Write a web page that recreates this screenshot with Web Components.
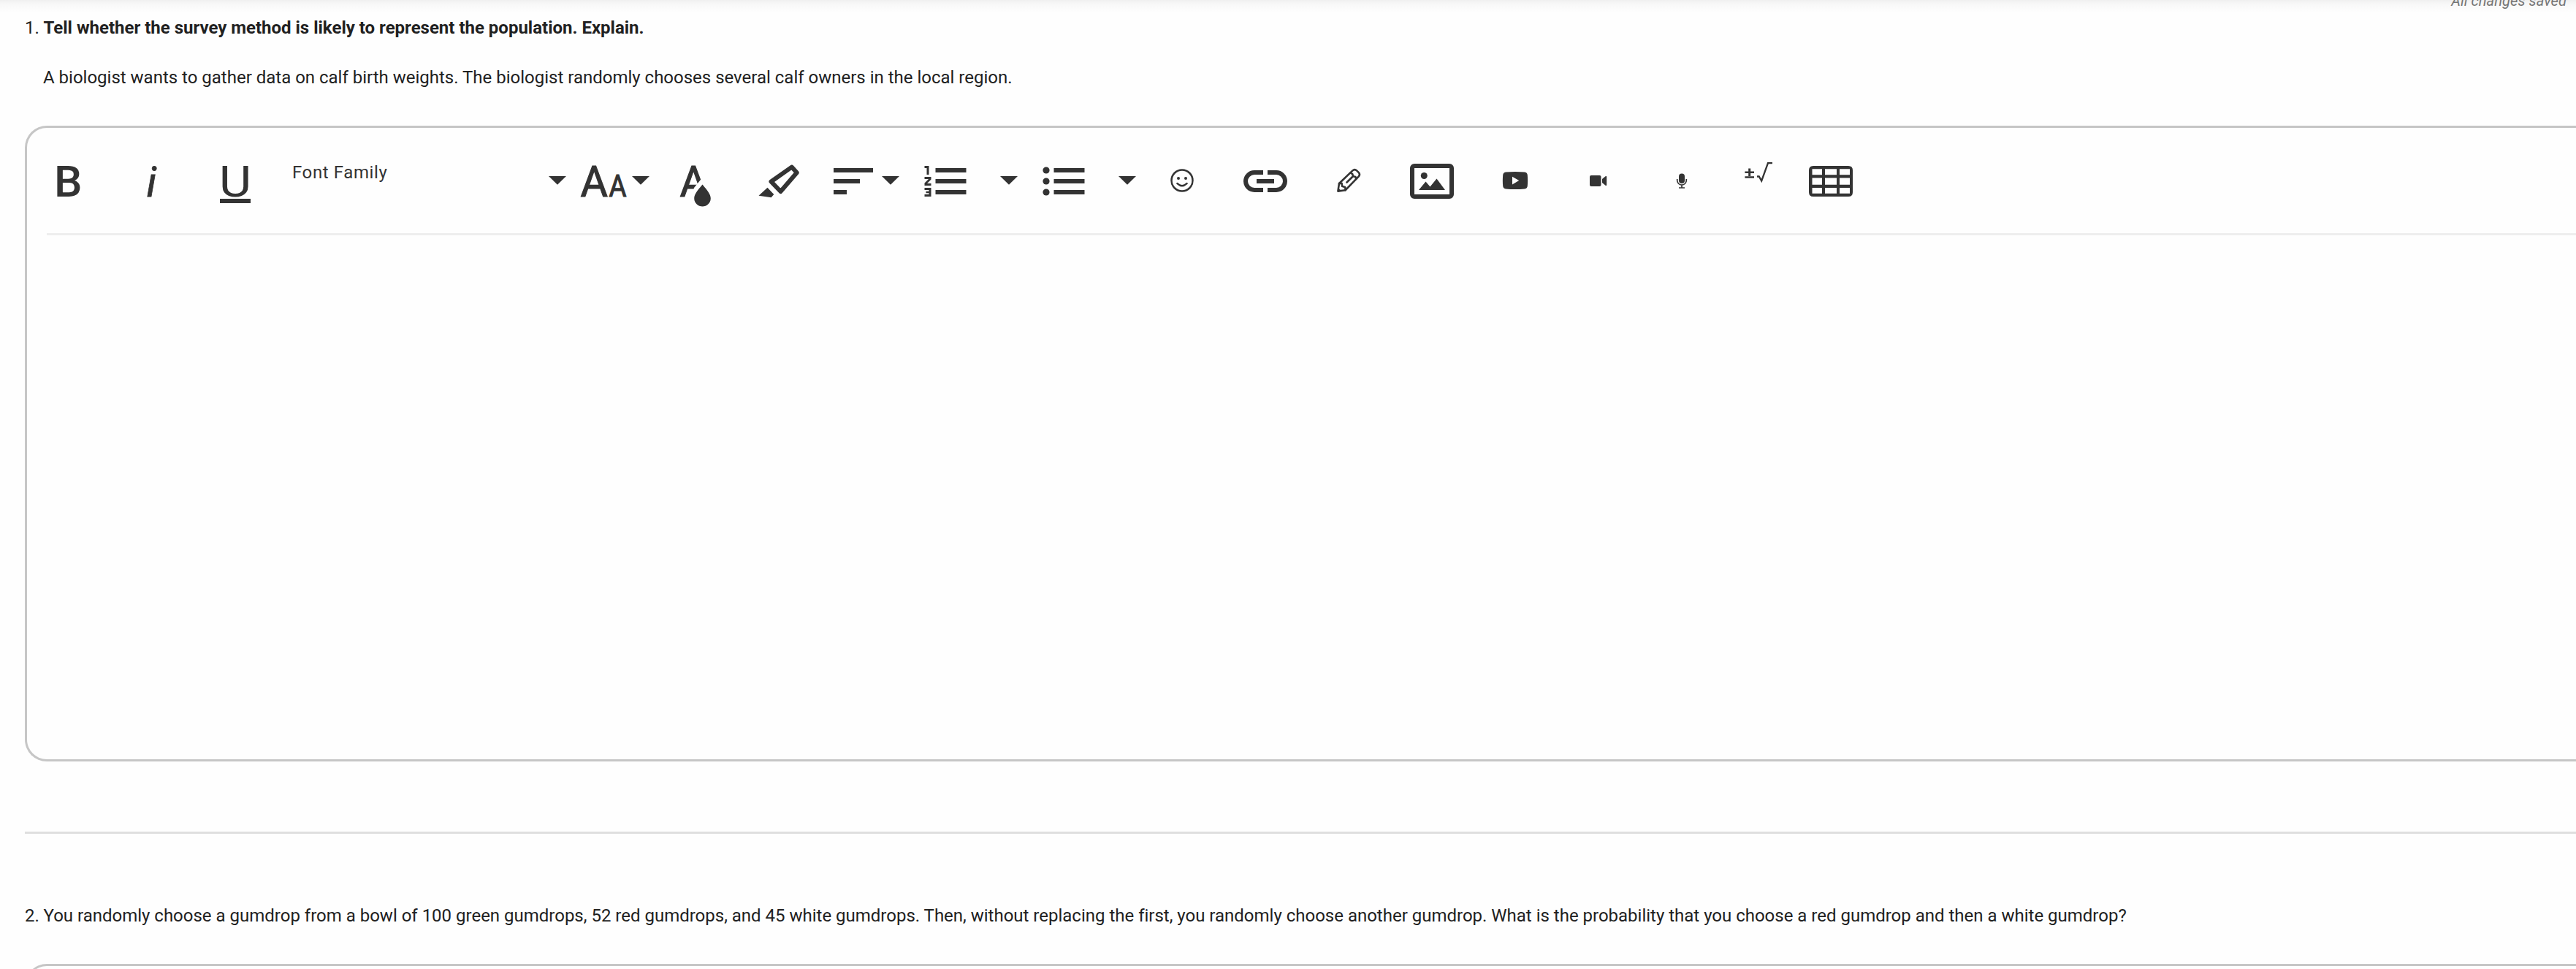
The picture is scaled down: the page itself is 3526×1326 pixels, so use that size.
<!DOCTYPE html>
<html lang="en">
<head>
<meta charset="utf-8">
<title>Assignment</title>
<style>
html,body{margin:0;padding:0;background:#fefefe;font-family:Roboto,"Liberation Sans",sans-serif}
body{height:1326px;overflow:hidden}
</style>
</head>
<body>
<assignment-page>
  <save-status slot="status">All changes saved</save-status>
  <question-item style="--head-h:172px;--lead:16px;--editor-h:864px" number="1.">
    <b>Tell whether the survey method is likely to represent the population. Explain.</b>
    <span slot="detail">A biologist wants to gather data on calf birth weights. The biologist randomly chooses several calf owners in the local region.</span>
    <rich-editor slot="editor"><editor-toolbar></editor-toolbar></rich-editor>
  </question-item>
  <section-rule></section-rule>
  <question-item style="--head-h:178px;--lead:90px;--editor-h:864px" number="2.">
    <span>You randomly choose a gumdrop from a bowl of 100 green gumdrops, 52 red gumdrops, and 45 white gumdrops. Then, without replacing the first, you randomly choose another gumdrop. What is the probability that you choose a red gumdrop and then a white gumdrop?</span>
    <rich-editor slot="editor"></rich-editor>
  </question-item>
</assignment-page>
<script>
const define = (name, html, setup) => customElements.define(name, class extends HTMLElement {
  constructor() {
    super();
    this.attachShadow({mode: 'open'}).innerHTML = html;
  }
  connectedCallback() { if (setup) setup(this); }
});

define('assignment-page', `<style>
:host{display:block;position:relative;height:1326px;overflow:hidden}
.shade{position:absolute;left:0;top:0;width:100%;height:17px;background:linear-gradient(#f0f0f0,#f8f8f8 35%,#fefefe)}
.status{position:absolute;right:13px;top:-13px}
main{position:relative;display:flex;flex-direction:column;padding-left:34px}
</style><div class="shade"></div><div class="status"><slot name="status"></slot></div><main><slot></slot></main>`);

define('save-status', `<style>:host{display:block;font:italic 400 20px/28px Roboto,sans-serif;letter-spacing:.1px;color:#757575;white-space:nowrap}</style><slot></slot>`);

define('section-rule', `<style>:host{display:block;height:3px;margin-top:96px;background:#dfdfdf}</style>`);

define('question-item', `<style>
:host{display:flex;flex-direction:column;color:#212121;font-size:24px;line-height:44px}
.head{height:var(--head-h);box-sizing:border-box;padding-top:var(--lead);display:flex;flex-direction:column;gap:24px;white-space:nowrap;letter-spacing:-.005px}
.line{display:flex}
.num{width:25.500px;flex:none}
.detail{padding-left:25px}
::slotted(rich-editor){height:var(--editor-h)}
</style><div class="head"><div class="line"><span class="num"></span><slot></slot></div><div class="detail"><slot name="detail"></slot></div></div><slot name="editor"></slot>`,
el => { el.shadowRoot.querySelector('.num').textContent = el.getAttribute('number'); });

define('rich-editor', `<style>
:host{display:flex;flex-direction:column;border:3px solid #c6c6c6;border-right:0;border-radius:30px 0 0 30px;background:#fefefe}
.bar{height:144px;flex:none}
.rule{height:3px;flex:none;margin-left:27px;background:#eee}
.area{flex:1}
</style><div class="bar"><slot></slot></div><div class="rule"></div><div class="area"></div>`);

// Icon art shares one coordinate grid; each entry is [left edge, width, markup].
const arrow = x => `<path d="M${x} 241h24l-12 11.7z"/>`;
const lines = x => `<path d="M${x} 230h42v6h-42zM${x} 245h42v6h-42zM${x} 260h42v6h-42z"/>`;
const ICONS = {
  bold: [37, 113, `<text x="74" y="269" font-size="59" font-weight="500" textLength="38.500" lengthAdjust="spacingAndGlyphs">B</text>`],
  italic: [150, 114, `<text x="200.500" y="269" font-size="58" font-style="italic" stroke="#333" stroke-width=".8">i</text>`],
  underline: [264, 114, `<text x="300" y="268.500" font-size="58.500" textLength="44" lengthAdjust="spacingAndGlyphs">U</text><path d="M301 272h42v6h-42z"/>`],
  size: [783, 110, `<text class="l" x="794.500" y="269" font-size="59" textLength="37.500" lengthAdjust="spacingAndGlyphs">A</text><text class="l" x="833.500" y="269" font-size="42" textLength="24" lengthAdjust="spacingAndGlyphs">A</text>${arrow(865)}`],
  color: [893, 112, `<text class="l" x="930.500" y="269" font-size="59" textLength="37.500" lengthAdjust="spacingAndGlyphs">A</text><path fill="#fefefe" d="M963 241l-13 16-5 18 8 15h27v-40z"/><path d="M961.500 252.500c5 6 11.300 13 11.300 18.700a11.300 11.300 0 0 1-22.600 0c0-5.700 6.300-12.700 11.300-18.700z"/>`],
  highlight: [1005, 114, `<path d="M1083.700 228.600L1090.700 236.300L1068.500 262L1055.500 248.500z" fill="none" stroke="#333" stroke-width="6" stroke-linejoin="round"/><path d="M1038.500 267.700l12-11 8.800 9.300-3.700 4.300z"/>`],
  align: [1119, 120, `<path d="M1141 230h54v6h-54zM1141 245h36v6h-36zM1141 260h18v6h-18z"/>${arrow(1207)}`],
  ordered: [1239, 162, `<path d="M1265.500 227h6v12h-3v-9h-3zM1265.500 242h9v3.500l-5.500 5.500h5.500v3h-9v-3.500l5.500-5.500h-5.500zM1265.500 257h9v12h-9v-3h6v-1.700h-4v-2.600h4v-1.700h-6z"/>${lines(1280.5)}${arrow(1369)}`],
  bullets: [1401, 162, `<circle cx="1432" cy="233" r="4.600"/><circle cx="1432" cy="248" r="4.600"/><circle cx="1432" cy="263" r="4.600"/>${lines(1442.5)}${arrow(1531)}`],
  emoji: [1563, 112, `<g fill="none" stroke="#333" stroke-width="2.500" stroke-linecap="round"><circle cx="1618" cy="247" r="14.500"/><path d="M1611.500 251.200q6.500 6 13 0"/></g><circle cx="1613" cy="244" r="2"/><circle cx="1623" cy="244" r="2"/>`],
  link: [1675, 114, `<path d="M1729 236h-12a12 12 0 0 0 0 24h12M1735 236h12a12 12 0 0 1 0 24h-12M1720 248h24" fill="none" stroke="#333" stroke-width="6"/>`],
  pencil: [1789, 114, `<g fill="none" stroke="#333" stroke-width="2.600" stroke-linejoin="round" stroke-linecap="round"><path d="M1831.400 261.600l1.600-10.600 18.500-17.600q2.800-2.500 5.500 0l2.800 2.800q2.300 2.600 0 5.200L1841.500 260.300z"/><path d="M1848.500 236.500l2.700 1.600 1 3.200 3.200.8.800 2.700M1833 251l3.600-.2.500 4 4.200 1.500.2 4M1843.500 249.500l8.200-8"/></g><path d="M1831 262l.6-5 4.700 4.400z"/>`],
  image: [1903, 114, `<rect x="1933" y="227" width="54" height="42" rx="3" fill="none" stroke="#333" stroke-width="6"/><circle cx="1949.300" cy="240.500" r="4.500"/><path d="M1942 260l9.500-11.500 6 7 9-11L1978 260z"/>`],
  video: [2017, 114, `<path fill-rule="evenodd" d="M2061 235.500q13-1 26 0 3.500.4 3.800 4 .7 7.500 0 15-.3 3.600-3.800 4-13 1-26 0-3.500-.4-3.800-4-.7-7.500 0-15 .3-3.600 3.800-4zM2070 241.800v10.600l9.200-5.300z"/>`],
  camera: [2131, 114, `<rect x="2176" y="240" width="15.500" height="15" rx="2"/><path d="M2193 245l4.500-3.800q1.700-.7 1.700.8v11q0 1.500-1.700.8L2193 250z"/>`],
  mic: [2245, 114, `<rect x="2298" y="237.500" width="8" height="13.500" rx="4"/><path d="M2295.700 245v1.800a6.300 6.300 0 0 0 12.600 0V245M2302 253v4M2298 257h8" fill="none" stroke="#333" stroke-width="1.700"/>`],
  math: [2359, 90, `<path d="M2393.200 230.500h3v4h4.800v2.600h-4.800v4h-3v-4h-4.800v-2.600h4.800zM2388.400 241.200h12.600v2.500h-12.600z"/><path d="M2405 241.500h2.700l3.500 6L2420 223.200h6" fill="none" stroke="#333" stroke-width="2.300"/>`],
  table: [2449, 114, `<path fill-rule="evenodd" d="M2482 227h48q6 0 6 6v30q0 6-6 6h-48q-6 0-6-6v-30q0-6 6-6zM2480.500 231.200v8h13.500v-8zM2498 231.200v8h16v-8zM2518 231.200v8h14v-8zM2480.500 243.400v9.300h13.500v-9.300zM2498 243.400v9.300h16v-9.300zM2518 243.400v9.300h14v-9.300zM2480.500 257v7.800h13.500v-7.800zM2498 257v7.800h16v-7.800zM2518 257v7.800h14v-7.800z"/>`]
};

define('tool-button', `<style>:host{display:block;flex:none;height:144px}svg{display:block;fill:#333;font-family:Roboto,sans-serif}.l{stroke:#333;stroke-width:1.1}</style><span></span>`,
el => {
  const [x, w, art] = ICONS[el.getAttribute('icon')];
  el.shadowRoot.querySelector('span').innerHTML = `<svg width="${w}" height="144" viewBox="${x} 175 ${w} 144">${art}</svg>`;
});

define('font-select', `<style>
:host{display:flex;flex:none;justify-content:space-between;width:405px;height:144px;box-sizing:border-box;padding:46px 8px 0 22px;color:#333;font-size:24px;line-height:30px;letter-spacing:.6px}
svg{display:block;margin-top:20px;fill:#333}
</style><span>Font Family</span><svg width="24" height="12" viewBox="0 0 24 12"><path d="M0 0h24L12 11.700z"/></svg>`);

const button = n => `<tool-button icon="${n}"></tool-button>`;
define('editor-toolbar', `<style>:host{display:flex;flex:none;height:144px}</style>
${['bold', 'italic', 'underline'].map(button).join('')}<font-select></font-select>${['size', 'color', 'highlight', 'align', 'ordered', 'bullets', 'emoji', 'link', 'pencil', 'image', 'video', 'camera', 'mic', 'math', 'table'].map(button).join('')}`);
</script>
</body>
</html>
